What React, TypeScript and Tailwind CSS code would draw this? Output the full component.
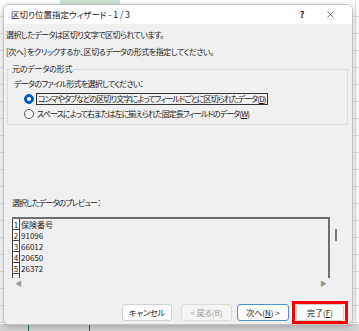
import React from 'react';
import { X } from 'lucide-react';

const jp = "[font-family:'Noto_Sans_CJK_JP','Noto_Sans',sans-serif] [font-feature-settings:'palt']";

const rows = ['保険番号', '91096', '66012', '20650', '26372'];

const Radio: React.FC<{ checked?: boolean }> = ({ checked }) => (
  <span className={`w-[10px] h-[10px] rounded-full border flex items-center justify-center shrink-0 ${checked ? 'border-[#005fb8] bg-[#005fb8]' : 'border-[#555] bg-white'}`}>
    {checked && <span className="w-[4px] h-[4px] rounded-full bg-white" />}
  </span>
);

export default function App() {
  return (
    <div className={`w-[359px] h-[331px] bg-white relative overflow-hidden ${jp} text-[#1a1a1a]`}>
      {/* spreadsheet behind */}
      <div className="absolute inset-0 bg-[repeating-linear-gradient(to_bottom,transparent_0,transparent_16px,#e2e2e2_16px,#e2e2e2_17px)]" />
      <div className="absolute top-0 bottom-0 left-[355px] w-px bg-[#e2e2e2]" />
      <div className="absolute left-0 right-0 bottom-0 h-[7px] bg-[#d6d6d6]" />
      <div className="absolute bottom-0 left-[28px] w-px h-[7px] bg-[#1e7145]" />
      <div className="absolute bottom-0 left-[89px] w-px h-[7px] bg-[#1e7145]" />
      <div className="absolute top-0 left-[60px] w-[60px] h-[4px] bg-[#cfe8d8]" />

      <div className="absolute left-[3px] top-[4px] w-[350px] h-[321px] rounded-[6px] bg-[#f0f0f0] border border-[#c4c4c4] shadow-[0_2px_8px_rgba(0,0,0,0.25)] flex flex-col overflow-hidden">
        {/* title bar */}
        <div className="h-[19px] bg-white flex items-center pl-[7px] pr-[16px] text-[8.5px] shrink-0">
          <span className="flex-1">区切り位置指定ウィザード - 1 / 3</span>
          <span className="w-[12px] text-center font-bold text-[9px] mr-[17px]">?</span>
          <X size={11} strokeWidth={1.3} />
        </div>

        <div className="flex-1 flex flex-col px-[2px] text-[8px] leading-none">
          <div className="mt-[7px] tracking-[-0.55px]">選択したデータは区切り文字で区切られています。</div>
          <div className="mt-[9px] tracking-[-0.45px]">[次へ] をクリックするか、区切るデータの形式を指定してください。</div>

          {/* group */}
          <div className="mt-[13px] ml-[1px] mr-[2px] border border-[#dcdcdc] h-[56px] relative">
            <span className="absolute -top-[5px] left-[3px] bg-[#f0f0f0] px-[1px] tracking-[-0.2px]">元のデータの形式</span>
            <div className="mt-[10px] ml-[6px] tracking-[-0.7px]">データのファイル形式を選択してください：</div>
            <div className="flex items-center mt-[5px] ml-[16px] gap-[2px]">
              <Radio checked />
              <span className="border border-[#333] px-[1px] py-[1px] tracking-[-0.9px]">コンマやタブなどの区切り文字によってフィールドごとに区切られたデータ(<u>D</u>)</span>
            </div>
            <div className="flex items-center mt-[4px] ml-[16px] gap-[3px]">
              <Radio />
              <span className="py-[1px] tracking-[-0.9px]">スペースによって右または左に揃えられた固定長フィールドのデータ(<u>W</u>)</span>
            </div>
          </div>

          <div className="mt-[74px] ml-[6px] tracking-[-0.9px]">選択したデータのプレビュー：</div>

          {/* preview */}
          <div className="flex mt-[10px] ml-[6px]">
            <div className="w-[318px] h-[61px] border-t-2 border-r-2 border-[#6e6e6e] bg-[#f0f0f0] overflow-hidden">
              {rows.map((r, i) => (
                <div key={i} className="flex items-stretch h-[11px] leading-[11px]">
                  <span className="w-[8px] border-x border-b border-[#444] text-[8px] text-center bg-white">{i + 1}</span>
                  <span className="text-[8px] pl-[1px]">{r}</span>
                </div>
              ))}
              <div className="w-[8px] h-[6px] border-x border-[#444]" />
            </div>
            <div className="ml-[5px] mt-[12px] w-[1.5px] h-[12px] bg-[#777]" />
          </div>
          <div className="flex justify-between w-[312px] ml-[9px] mt-[2px] text-[7px] text-[#999]">
            <span>◀</span>
            <span>▶</span>
          </div>

          {/* buttons */}
          <div className="flex items-center mt-auto text-[8px]">
            <button className="ml-[116px] w-[50px] h-[17px] rounded-[3px] bg-[#fdfdfd] border border-[#d0d0d0]">キャンセル</button>
            <button className="ml-[9px] w-[51px] h-[17px] rounded-[3px] bg-[#f5f5f5] border border-[#dcdcdc] text-[#9a9a9a]">&lt; 戻る(B)</button>
            <button className="ml-[5px] w-[52px] h-[17px] rounded-[3px] bg-[#fdfdfd] border border-[#4a90d9]">次へ(<u>N</u>) &gt;</button>
            <div className="ml-[3px] border-[3px] border-[#ff0000] px-[1px]">
              <button className="w-[48px] h-[17px] rounded-[3px] bg-[#fdfdfd] border border-[#d0d0d0]">完了(<u>F</u>)</button>
            </div>
          </div>
        </div>
      </div>
    </div>
  );
}
